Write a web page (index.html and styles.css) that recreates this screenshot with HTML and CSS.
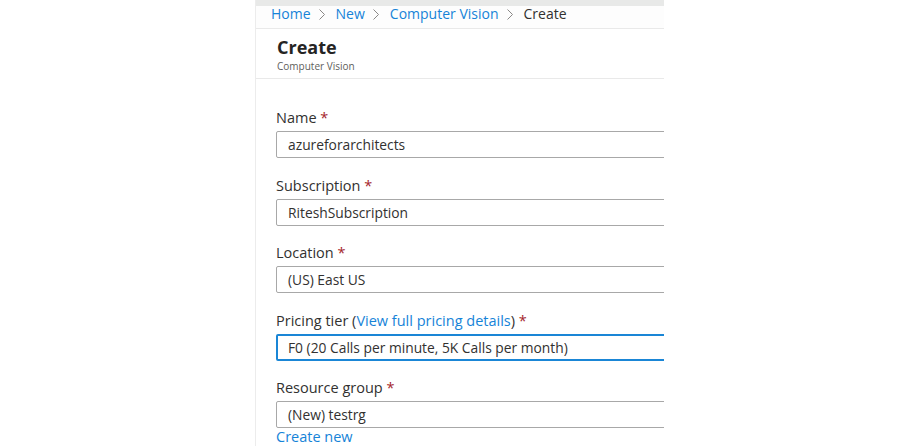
FILE: index.html
```html
<!DOCTYPE html>
<html lang="en">
<head>
<meta charset="utf-8">
<title>Create - Computer Vision</title>
<link rel="stylesheet" href="styles.css">
</head>
<body>
<div class="blade">
  <div class="topbar"></div>
  <nav class="crumbs">
    <a class="crumb-link">Home</a>
    <svg class="chev" viewBox="0 0 6 11" width="6" height="11"><polyline points="0.5,0.5 5.5,5.5 0.5,10.5" fill="none" stroke="#8a8886" stroke-width="1"/></svg>
    <a class="crumb-link">New</a>
    <svg class="chev" viewBox="0 0 6 11" width="6" height="11"><polyline points="0.5,0.5 5.5,5.5 0.5,10.5" fill="none" stroke="#8a8886" stroke-width="1"/></svg>
    <a class="crumb-link">Computer Vision</a>
    <svg class="chev" viewBox="0 0 6 11" width="6" height="11"><polyline points="0.5,0.5 5.5,5.5 0.5,10.5" fill="none" stroke="#8a8886" stroke-width="1"/></svg>
    <span class="crumb-current">Create</span>
  </nav>
  <header class="head">
    <h1 class="title">Create</h1>
    <div class="subtitle">Computer Vision</div>
  </header>
  <form class="form">
    <div class="field">
      <div class="label">Name <span class="req">*</span></div>
      <div class="input">azureforarchitects</div>
    </div>
    <div class="field">
      <div class="label">Subscription <span class="req">*</span></div>
      <div class="input">RiteshSubscription</div>
    </div>
    <div class="field">
      <div class="label">Location <span class="req">*</span></div>
      <div class="input">(US) East US</div>
    </div>
    <div class="field">
      <div class="label">Pricing tier (<a class="link">View full pricing details</a>) <span class="req">*</span></div>
      <div class="input focused">F0 (20 Calls per minute, 5K Calls per month)</div>
    </div>
    <div class="field">
      <div class="label">Resource group <span class="req">*</span></div>
      <div class="input">(New) testrg</div>
      <a class="link create-new">Create new</a>
    </div>
  </form>
</div>
</body>
</html>
```
FILE: styles.css
```css
* { box-sizing: border-box; }
html, body { margin: 0; padding: 0; background: #ffffff; }
body {
  font-family: "Open Sans", "Noto Sans", "Liberation Sans", sans-serif;
  color: #323130;
  width: 919px;
  height: 446px;
  overflow: hidden;
}
.blade {
  margin-left: 255px;
  width: 409px;
  height: 446px;
  border-left: 1px solid #ececec;
  overflow: hidden;
}
.topbar {
  height: 6px;
  background: #e8e9e8;
}
.crumbs {
  display: flex;
  align-items: center;
  height: 23px;
  padding: 0 0 6px 15px;
  border-bottom: 1px solid #e9e9e9;
  font-size: 14px;
  line-height: 16px;
  white-space: nowrap;
  background: #fdfdfd;
}
.crumb-link { color: #1683d8; }
.crumb-current { color: #323130; }
.chev { margin: 0 11px 0 8px; flex: none; }
.head {
  height: 50px;
  padding: 6px 0 0 21px;
  border-bottom: 1px solid #e9e9e9;
}
.title {
  margin: 0;
  font-size: 18px;
  font-weight: 700;
  line-height: 24px;
  color: #252423;
}
.subtitle {
  font-size: 10px;
  line-height: 14px;
  color: #605e5c;
}
.form {
  padding: 29px 0 0 20px;
}
.field {
  margin-bottom: 17.5px;
}
.label {
  font-size: 14.5px;
  line-height: 20px;
  margin-bottom: 3px;
  color: #323130;
  white-space: nowrap;
}
.req { color: #a4262c; }
.link { color: #1683d8; }
.input {
  width: 420px;
  height: 27px;
  border: 1px solid #a8a8a8;
  border-radius: 2px;
  padding: 0 11px;
  font-size: 13.8px;
  line-height: 25px;
  color: #323130;
  white-space: nowrap;
}
.input.focused {
  border: 2px solid #1a86d6;
  padding: 0 10px;
  line-height: 23px;
}
.create-new {
  display: block;
  font-size: 14.5px;
  line-height: 17px;
}
```
